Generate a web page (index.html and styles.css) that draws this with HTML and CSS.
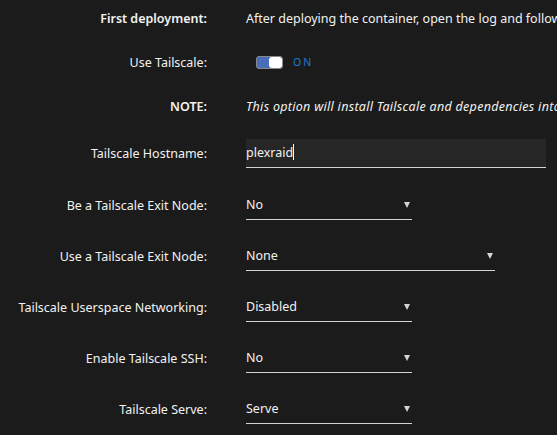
FILE: index.html
```html
<!DOCTYPE html>
<html lang="en">
<head>
    <meta charset="UTF-8">
    <meta name="viewport" content="width=device-width, initial-scale=1.0">
    <title>Tailscale Settings</title>
    <link rel="stylesheet" href="styles.css">
</head>
<body>
    <div class="settings">
        <div class="row row-text">
            <div class="label label-bold">First deployment:</div>
            <div class="value">After deploying the container, open the log and follow the link to register the container to your Tailnet.</div>
        </div>
        <div class="row row-text">
            <div class="label">Use Tailscale:</div>
            <div class="value">
                <span class="switch"><span class="switch-knob"></span></span>
                <span class="switch-text">ON</span>
            </div>
        </div>
        <div class="row row-text">
            <div class="label label-bold">NOTE:</div>
            <div class="value note">This option will install Tailscale and dependencies into the container.</div>
        </div>
        <div class="row row-input">
            <div class="label">Tailscale Hostname:</div>
            <div class="value">
                <div class="textbox">plexraid<span class="caret"></span></div>
            </div>
        </div>
        <div class="row">
            <div class="label">Be a Tailscale Exit Node:</div>
            <div class="value">
                <div class="dropdown">No</div>
            </div>
        </div>
        <div class="row">
            <div class="label">Use a Tailscale Exit Node:</div>
            <div class="value">
                <div class="dropdown dropdown-wide">None</div>
            </div>
        </div>
        <div class="row">
            <div class="label">Tailscale Userspace Networking:</div>
            <div class="value">
                <div class="dropdown">Disabled</div>
            </div>
        </div>
        <div class="row">
            <div class="label">Enable Tailscale SSH:</div>
            <div class="value">
                <div class="dropdown">No</div>
            </div>
        </div>
        <div class="row">
            <div class="label">Tailscale Serve:</div>
            <div class="value">
                <div class="dropdown">Serve</div>
            </div>
        </div>
    </div>
</body>
</html>
```

FILE: styles.css
```css
html, body {
    height: 100%;
}
body {
    background-color: #1c1b1b;
    color: #f2f2f2;
    font-family: "Noto Sans", sans-serif;
    font-size: 12.5px;
    margin: 0;
    padding-top: 7px;
    overflow: hidden;
}
.settings {
    display: flex;
    flex-direction: column;
    gap: 22px;
}
.row {
    display: flex;
    align-items: center;
    white-space: nowrap;
}
.row-text {
    height: 22px;
}
.row-input {
    margin-bottom: 1px;
}
.label {
    width: 207px;
    flex-shrink: 0;
    text-align: right;
}
.label-bold {
    font-weight: 600;
}
.value {
    margin-left: 39px;
    display: flex;
    align-items: center;
}
.note {
    font-style: italic;
    letter-spacing: 0.3px;
}

/* on/off switch */
.switch {
    width: 25px;
    height: 11px;
    border: 1px solid #8a8a8a;
    border-radius: 3px;
    background-color: #486dba;
    margin-left: 10px;
    display: flex;
    justify-content: flex-end;
}
.switch-knob {
    width: 13px;
    height: 11px;
    border-radius: 3px;
    background-color: #ffffff;
}
.switch-text {
    color: #1c7ad4;
    font-size: 10.5px;
    letter-spacing: 2px;
    margin-left: 10px;
}

/* text input */
.textbox {
    width: 300px;
    height: 29px;
    line-height: 28px;
    background-color: #262626;
    border-bottom: 1px solid #d4d4d4;
    box-sizing: border-box;
}
.caret {
    display: inline-block;
    width: 1px;
    height: 16px;
    background-color: #ffffff;
    vertical-align: -3px;
}

/* select boxes */
.dropdown {
    position: relative;
    width: 166px;
    box-sizing: border-box;
    padding: 4px 0;
    line-height: 20px;
    border-bottom: 1px solid #d4d4d4;
}
.dropdown-wide {
    width: 249px;
}
.dropdown::after {
    content: "";
    position: absolute;
    right: 2px;
    top: 11px;
    border-left: 3px solid transparent;
    border-right: 3px solid transparent;
    border-top: 6px solid #d4d4d4;
}
```
